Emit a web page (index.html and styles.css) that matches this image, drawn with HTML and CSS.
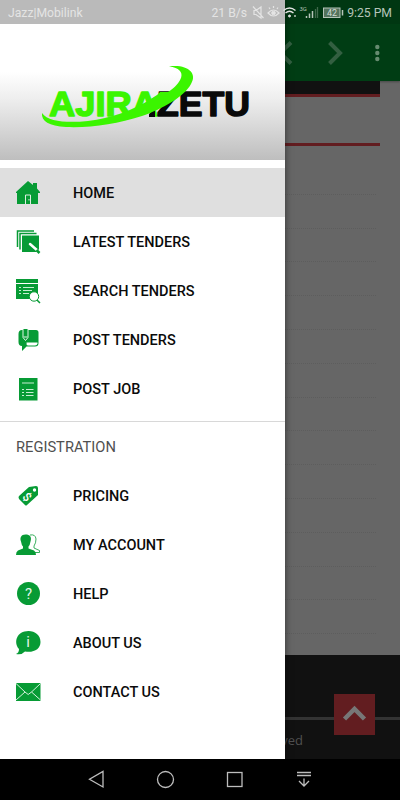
FILE: index.html
```html
<!DOCTYPE html>
<html lang="en">
<head>
    <meta charset="UTF-8">
    <meta name="viewport" content="width=device-width, initial-scale=1.0">
    <title>Ajira Zetu</title>
    <link rel="stylesheet" href="styles.css">
</head>
<body>
    <div class="screen">
        <!-- Page behind the drawer -->
        <div class="page">
            <header class="toolbar">
                <svg width="130" height="57" viewBox="270 24 130 57" fill="none">
                    <path d="M291 42.500L280 53L291 63.500M329.500 42.500L340 53L329.500 63.500" stroke="#335f41" stroke-width="4"/>
                    <g fill="#668b70"><circle cx="377.300" cy="47" r="2.200"/><circle cx="377.300" cy="53" r="2.200"/><circle cx="377.300" cy="59" r="2.200"/></g>
                </svg>
            </header>
            <main class="content">
                <div class="banner"></div>
                <div class="heading"></div>
                <ul class="rows">
                    <li></li><li></li><li></li><li></li><li></li><li></li><li></li>
                    <li></li><li></li><li></li><li></li><li></li><li></li><li></li>
                </ul>
            </main>
            <footer class="footer">
                <div class="footer-top"></div>
                <p class="copyright">All Rights Reserved</p>
            </footer>
            <a class="to-top">
                <svg width="41" height="41" viewBox="0 0 41 41"><path d="M10.500 25L20.500 15L30.500 25" fill="none" stroke="#777" stroke-width="4.500"/></svg>
            </a>
        </div>

        <!-- Navigation drawer -->
        <nav class="drawer">
            <div class="drawer-header">
                <svg width="285" height="136" viewBox="0 24 285 136">
                    <text class="logo-text logo-green" x="49" y="116.300" textLength="109" lengthAdjust="spacingAndGlyphs">AJIRA</text>
                    <text class="logo-text logo-black" x="157" y="116.300" textLength="93" lengthAdjust="spacingAndGlyphs">ZETU</text>
                    <path fill="#090909" d="M149 114L155 109V117H149Z"/>
                    <path fill="#3bf500" d="M42 113C48 122 68 123 88 121C112 118 130 111 146 102L157 95L160 92H168C181 84 190 69 169 66.500C187 64 198 73 191 84C184 97 162 109 142 116C117 124 91 128 66 127C49 126 41 121 42 113Z"/>
                </svg>
            </div>
            <ul class="menu">
                <li class="item active">
                    <svg class="icon" viewBox="0 0 24 24"><path fill="#079b35" d="M12 0L17 4V2H21V7.500L24 11V12H22V23H1V12H0V11Z"/><path d="M9.500 23V14H14.500V23" fill="none" stroke="#ddeee1"/><path d="M13 18V19.500" stroke="#ddeee1"/></svg>
                    <span>HOME</span>
                </li>
                <li class="item">
                    <svg class="icon" viewBox="0 0 24 24"><path d="M1.500 17V1H18M4 19.500V3.500H20.500" fill="none" stroke="#079b35" stroke-width="1.500"/><path fill="#079b35" d="M6 5.500H23V22H6Z"/><path d="M14 14L22 21" stroke="#fff" stroke-width="2.500" stroke-linecap="round"/><path d="M20.500 20L23.500 23" stroke="#079b35" stroke-width="2.500"/></svg>
                    <span>LATEST TENDERS</span>
                </li>
                <li class="item">
                    <svg class="icon" viewBox="0 0 24 24"><path fill="#079b35" d="M0 0H22V4H0ZM0 5H22V20H0Z"/><path d="M3 8.500H5M7 8.500H18M3 11.500H5M7 11.500H16M3 14.500H5M7 14.500H13" stroke="#c8eed3"/><circle cx="18" cy="17.500" r="4.700" fill="#fff" stroke="#079b35"/><path d="M21 21L24 24" stroke="#079b35" stroke-width="1.500"/></svg>
                    <span>SEARCH TENDERS</span>
                </li>
                <li class="item">
                    <svg class="icon" viewBox="0 0 24 24"><path fill="#079b35" d="M6 2H20Q22.500 2 22.500 4.500V15Q22.500 18.500 19 18.500H10.500L6 23V18Q2.500 18 2.500 14V6Q2.500 2 6 2Z"/><path d="M10.500 14.500H21.500V15.500Q21 17.500 19 17.500H12Q10 17 10.500 14.500Z" fill="#fff"/><path d="M7 1V9.500L9.500 12.500L12 9.500V1" fill="#079b35" stroke="#e0f6e6"/><path d="M7.500 9H11.500" stroke="#e0f6e6"/></svg>
                    <span>POST TENDERS</span>
                </li>
                <li class="item">
                    <svg class="icon" viewBox="0 0 24 24"><path fill="#079b35" d="M3 1H21.500V23.500H3Z"/><path d="M6 6H18M6 12.500H8M10 12.500H17.500M6 15.500H8M10 15.500H17.500M6 18.500H8M10 18.500H17.500" stroke="#c8eed3"/></svg>
                    <span>POST JOB</span>
                </li>
            </ul>
            <h2 class="section">REGISTRATION</h2>
            <ul class="menu">
                <li class="item">
                    <svg class="icon" viewBox="0 0 24 24"><path fill="#079b35" d="M13 3L20 2Q22 2 22 4V11L11 21Q10 22 9 21L3 15Q2 13 3 12Z"/><circle cx="18.500" cy="6" r="1.700" fill="#fff"/><text class="dollar" x="11" y="17" transform="rotate(45 11 13)">$</text></svg>
                    <span>PRICING</span>
                </li>
                <li class="item">
                    <svg class="icon" viewBox="0 0 24 24"><path d="M14 2Q19.500 1 20 6Q20 10 18 13V15L23.500 17.500V19.500H19" fill="none" stroke="#079b35" stroke-width=".8"/><path fill="#079b35" d="M9.500 1.500C5 1.500 3.500 5 5 8.500Q5.500 12 7 13.500V15.500L2 17.500Q0 18.500 0 22H20Q20 18.500 18 17.500L12.500 15.500V13.500Q14 12 14.500 8.500C16 4 14 1.500 9.500 1.500Z"/></svg>
                    <span>MY ACCOUNT</span>
                </li>
                <li class="item">
                    <svg class="icon" viewBox="0 0 24 24"><circle cx="12.500" cy="11.500" r="11.500" fill="#079b35"/><text class="mark" x="12.500" y="17">?</text></svg>
                    <span>HELP</span>
                </li>
                <li class="item">
                    <svg class="icon" viewBox="0 0 24 24"><path fill="#079b35" d="M12.500 0C19 0 24.500 4 24.500 11C24.500 18 18 22 9 20.500Q6 24 0 23Q3 22 3 18C-3 11 1 0 12.500 0Z"/><text class="mark" x="12.200" y="16">i</text></svg>
                    <span>ABOUT US</span>
                </li>
                <li class="item">
                    <svg class="icon" viewBox="0 0 24 24"><path fill="#079b35" d="M0 3H24.500V21H0Z"/><path d="M0 3.500L9 12L12.200 14.500L15.500 12L24.500 3.500M0 20L9 12M15.500 12L24.500 20" fill="none" stroke="#d5f2dd"/></svg>
                    <span>CONTACT US</span>
                </li>
            </ul>
        </nav>

        <!-- Status bar -->
        <div class="status">
            <span class="carrier">Jazz|Mobilink</span>
            <span class="speed">21 B/s</span>
            <svg class="status-icons" width="93" height="24" viewBox="250 0 93 24" fill="none" stroke="#e4e4e4">
                <path d="M253 10.500H255L260 7V18L255 14.500H253ZM252 6.500L262.500 18" stroke-width="1.200"/>
                <path d="M267 13Q272.500 7 278 13Q272.500 19 267 13ZM269 9L268 7.500M272.500 8V6M276 9L277 7.500" stroke-width="1.200"/><circle cx="272.500" cy="13" r="1.800" fill="#e4e4e4"/>
                <path d="M282.500 10.500Q288.500 5.500 294.500 10.500M284.500 13Q288.500 9.500 292.500 13" stroke-width="1.300"/><circle cx="288.500" cy="16" r="1" fill="#e4e4e4"/>
                <g stroke="#b5c4b9"><path d="M293 16H295M305.500 18V16M308.500 18V13.500M311.500 18V11" stroke-width="1.500"/><path d="M314.500 18V9M316.500 18V7" stroke="#40694c" stroke-width="1.300"/><rect x="322.500" y="8" width="16.500" height="9.500" fill="#54735d"/><path d="M341.500 10V15.500" stroke-width="1.500"/></g>
                <text class="tiny" x="298.500" y="10.500">3G</text>
                <text class="battery" x="326" y="16">42</text>
            </svg>
            <span class="time">9:25 PM</span>
        </div>

        <!-- Android navigation bar -->
        <div class="softkeys">
            <svg width="400" height="41" viewBox="0 759 400 41" fill="none" stroke="#bdbdbd" stroke-width="1.300">
                <path d="M103 771.500V787L89.500 779.300Z"/>
                <circle cx="165.500" cy="779.500" r="8"/>
                <rect x="227.500" y="772.500" width="14.500" height="14"/>
                <path d="M297 772.500H311M297 775.500H311M304 778.500V786M299 781L304 786L309 781"/>
            </svg>
        </div>
    </div>
</body>
</html>
```
FILE: styles.css
```css
/* Global Styles */
body {
    font-family: Roboto, sans-serif;
    margin: 0;
    background: #000;
}

ul {
    list-style: none;
    margin: 0;
    padding: 0;
}

svg {
    display: block;
    flex-shrink: 0;
}

.screen {
    position: relative;
    width: 400px;
    height: 800px;
    overflow: hidden;
    display: flex;
    flex-direction: column;
}

/* Dimmed page */
.page {
    position: relative;
    flex: 1;
    min-height: 0;
    display: flex;
    flex-direction: column;
    background: #666;
}

.toolbar {
    height: 57px;
    padding-top: 24px;
    background: #003d14;
    display: flex;
    justify-content: flex-end;
    box-shadow: 0 1px 2px rgba(0, 0, 0, 0.3);
}

.content {
    flex: 1;
    min-height: 0;
    width: 380px;
    overflow: hidden;
}

.banner {
    height: 13px;
    background: #111;
    border-bottom: 3px solid #621d20;
}

.heading {
    height: 46px;
    border-bottom: 3px solid #621d20;
    margin-bottom: 15px;
}

.rows li {
    height: 32.800px;
    border-bottom: 1px dotted #5d5d5d;
    margin-right: 4px;
}

.footer {
    height: 104px;
    background: #111;
}

.footer-top {
    height: 62px;
    border-bottom: 3px solid #333;
}

.copyright {
    margin: 11px 97px 0 0;
    text-align: right;
    font: 13px/18px "Open Sans", sans-serif;
    color: #505050;
}

.to-top {
    position: absolute;
    right: 25px;
    bottom: 24px;
    background: #621d20;
}

/* Drawer */
.drawer {
    position: absolute;
    left: 0;
    top: 0;
    width: 285px;
    height: 759px;
    background: #fff;
    box-shadow: 0 0 7px rgba(0, 0, 0, 0.5);
}

.drawer-header {
    margin-top: 24px;
    height: 136px;
    margin-bottom: 8px;
    background: linear-gradient(#fff 35%, #eee 55%, #bebebe);
}

.logo-text {
    font: bold 35.5px "Liberation Sans", sans-serif;
    stroke-width: 1.5;
    stroke-linejoin: round;
}

.logo-green {
    fill: #3bf500;
    stroke: #3bf500;
}

.logo-black {
    fill: #090909;
    stroke: #090909;
}

.item {
    display: flex;
    align-items: center;
    gap: 33px;
    height: 49px;
    padding-left: 16px;
    font-size: 14.5px;
    font-weight: 500;
    color: #0b0b0b;
}

.item span {
    padding-top: 2px;
}

.item.active {
    background: #dfdfdf;
}

.icon {
    width: 24px;
    height: 24px;
    overflow: visible;
}

.dollar {
    font-size: 12px;
    font-weight: 500;
    fill: #fff;
    text-anchor: middle;
}

.mark {
    font-size: 15px;
    font-weight: 400;
    fill: #e2f6e7;
    text-anchor: middle;
}

.section {
    margin: 8px 0 0;
    padding-left: 16px;
    border-top: 1px solid #d8d8d8;
    height: 49px;
    font-size: 14.7px;
    font-weight: 400;
    line-height: 51px;
    color: #505050;
}

/* Status bar */
.status {
    position: absolute;
    left: 0;
    top: 0;
    width: 384px;
    height: 24px;
    padding: 0 8px;
    display: flex;
    align-items: center;
    font-size: 12.2px;
    line-height: 26px;
    color: #e4e4e4;
    background: linear-gradient(to right, #bababa 285px, rgba(0, 0, 0, 0.1) 285px);
}

.carrier,
.speed,
.time {
    padding-top: 2px;
}

.speed {
    margin-left: auto;
    margin-right: 4px;
}

.time {
    margin-left: 3px;
    color: #b5c4b9;
}

.tiny {
    font-size: 6px;
    fill: #b5c4b9;
    stroke: none;
}

.battery {
    font-size: 9px;
    fill: #d0dad3;
    stroke: none;
}

/* Soft keys */
.softkeys {
    height: 41px;
    background: #000;
}
```
